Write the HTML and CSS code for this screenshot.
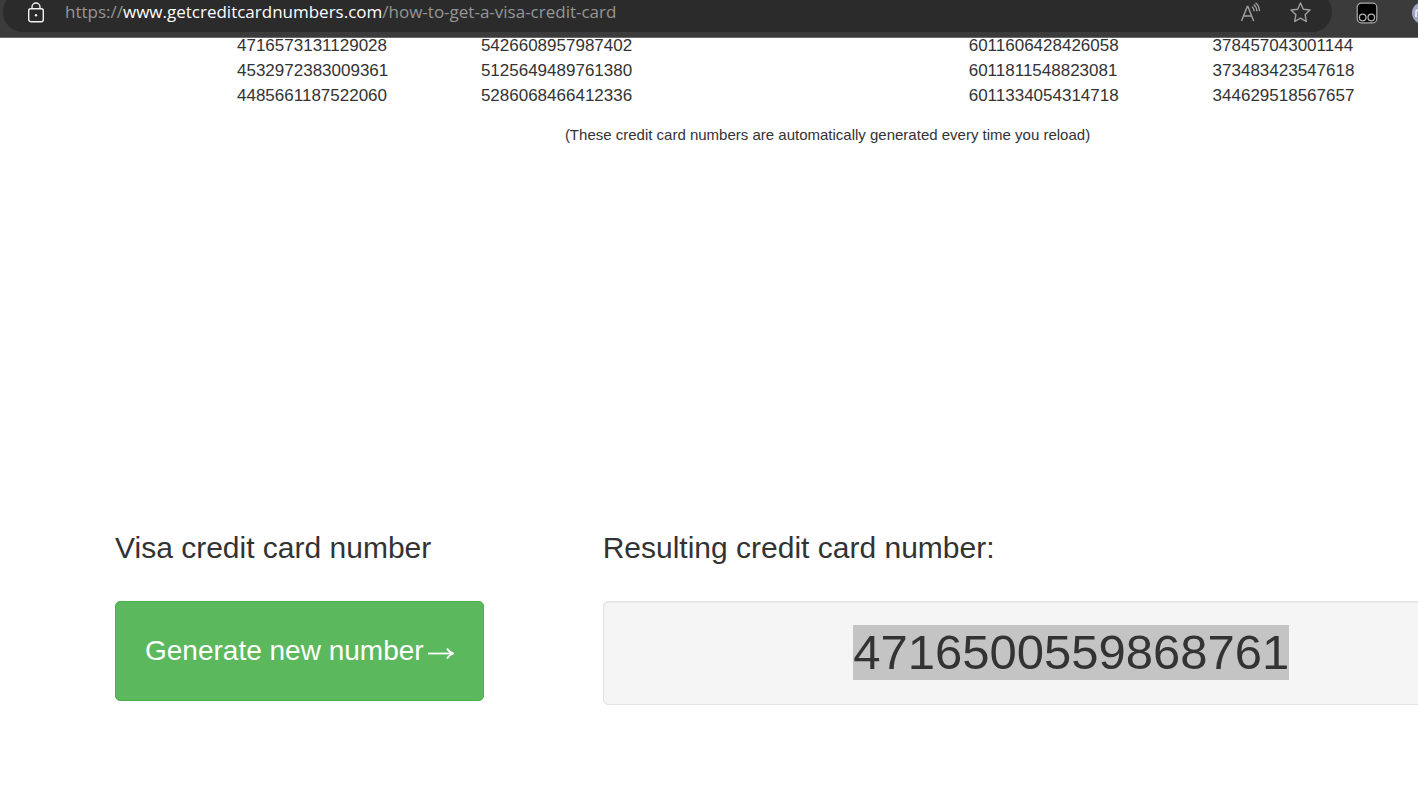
FILE: index.html
```html
<!DOCTYPE html>
<html lang="en">
<head>
<meta charset="utf-8">
<title>How to get a Visa credit card</title>
<link rel="stylesheet" href="styles.css">
</head>
<body>
<header class="toolbar">
  <div class="address">
    <button class="tool lock" type="button" aria-label="Site information">
      <svg width="18" height="22" viewBox="0 0 18 22" fill="none" stroke="#f2f2f2" stroke-width="1.4"><rect x="1.7" y="7.7" width="14.6" height="13" rx="2"/><path d="M5 7.500V6a4 4 0 0 1 8 0v1.500"/><circle cx="9" cy="14.200" r="1.200" fill="#f2f2f2" stroke="none"/></svg>
    </button>
    <div class="url" role="textbox" aria-label="Address" contenteditable="true" spellcheck="false">https://<span class="host">www.getcreditcardnumbers.com</span>/how-to-get-a-visa-credit-card</div>
    <button class="tool" type="button" aria-label="Read aloud">
      <svg width="22" height="22" viewBox="0 0 22 22" fill="none" stroke="#a0a0a0" stroke-width="1.4"><path d="M2.500 20 8.300 5.500h.6l5.800 14.500M4.500 15h8.200M13 5.700q2 1.600 2.300 4.600M14.700 3.500q3 2.400 3.200 6.800M16.500 1.700q3.800 3 4 8.400"/></svg>
    </button>
    <button class="tool" type="button" aria-label="Add to favorites">
      <svg width="22" height="22" viewBox="0 0 22 22" fill="none" stroke="#a0a0a0" stroke-width="1.4" stroke-linejoin="round"><path d="M11.500 2 14.300 8.200 21 9 16.100 13.700 17.300 20.500 11.500 17.200 5.700 20.500 6.900 13.700 2 9 8.700 8.200Z"/></svg>
    </button>
  </div>
  <button class="tool extension" type="button" aria-label="Extension">
    <svg width="22" height="22" viewBox="0 0 22 22"><rect x="1.200" y="1.200" width="19.600" height="19.600" rx="4" fill="#000" stroke="#a8a8a8" stroke-width="1.200"/><g fill="none" stroke="#b4b4b4" stroke-width="1.300"><circle cx="6.700" cy="15.500" r="3.300"/><circle cx="15.300" cy="15.500" r="3.300"/></g></svg>
  </button>
  <button class="tool profile" type="button" aria-label="Profile">
    <svg width="22" height="22" viewBox="0 0 22 22"><circle cx="11" cy="11" r="11" fill="#a0a4c6"/><path d="M4 15v-5q0-2 2.500-2T9 10v5" fill="none" stroke="#f4f4f4" stroke-width="1.500"/></svg>
  </button>
</header>
<main class="page">
  <table class="numbers" aria-label="Credit card numbers">
    <tbody>
      <tr><td>4716573131129028</td><td>5426608957987402</td><td></td><td>6011606428426058</td><td>378457043001144</td></tr>
      <tr><td>4532972383009361</td><td>5125649489761380</td><td></td><td>6011811548823081</td><td>373483423547618</td></tr>
      <tr><td>4485661187522060</td><td>5286068466412336</td><td></td><td>6011334054314718</td><td>344629518567657</td></tr>
    </tbody>
  </table>
  <p class="note">(These credit card numbers are automatically generated every time you reload)</p>
  <div class="generator">
    <section class="source">
      <h3>Visa credit card number</h3>
      <button class="generate" type="button">Generate new number
        <svg width="26" height="20" viewBox="0 0 26 20" fill="none" stroke="#fff" stroke-width="1.800" aria-hidden="true"><path d="M0 12.500H25"/><path d="M19 7.500Q21 11 25.500 12.500 21 14 19 17.500"/></svg>
      </button>
    </section>
    <section class="result">
      <h3 id="result-title">Resulting credit card number:</h3>
      <output class="well" aria-labelledby="result-title"><mark>4716500559868761</mark></output>
    </section>
  </div>
</main>
</body>
</html>
```
FILE: styles.css
```css
* {
  box-sizing: border-box;
}

body {
  margin: 0;
  min-height: 100vh;
  overflow: hidden;
  background: #fff;
  color: #333;
  font-family: "Liberation Sans", Arial, sans-serif;
}

.toolbar {
  display: flex;
  align-items: flex-end;
  height: 38px;
  padding: 0 0 5px 3px;
  overflow: hidden;
  background: #3b3b3b;
  border-bottom: 1px solid #6a6a6a;
}

.address {
  display: flex;
  flex: 1;
  align-items: center;
  gap: 28px;
  height: 40px;
  padding: 0 21px 0 24px;
  border-radius: 20px;
  background: #2b2b2b;
}

.tool {
  display: flex;
  flex: none;
  padding: 0;
  border: 0;
  background: none;
}

.lock {
  margin-right: -8px;
}

.url {
  flex: 1;
  color: #969696;
  font: 17px/24px "Open Sans", sans-serif;
  white-space: nowrap;
  outline: 0;
}

.host {
  color: #fff;
}

.extension {
  margin: 0 34px 8px 24px;
}

.profile {
  margin: 0 -16px 8px 0;
}

/* The container is wider than the window and runs off its right edge. */
.page {
  margin: 0 -122px 0 115px;
}

.numbers {
  width: calc(100% * 10 / 12 + 32px);
  margin: -5px 0 0 122px;
  border-collapse: collapse;
  table-layout: fixed;
  font-size: 17px;
  line-height: 25px;
}

.numbers td {
  padding: 0;
}

.note {
  margin: 17px 0 386px;
  font-size: 15px;
  line-height: 20px;
  text-align: center;
}

.generator {
  display: grid;
  grid-template-columns: repeat(12, 1fr);
  column-gap: 38px;
}

.source {
  grid-column: span 4;
}

.result {
  grid-column: span 8;
}

h3 {
  margin: 0 0 36px;
  font-size: 30px;
  font-weight: 400;
  line-height: 34px;
}

.generate {
  display: flex;
  align-items: center;
  gap: 4px;
  height: 100px;
  padding: 0 29px;
  border: 1px solid #4cae4c;
  border-radius: 5px;
  background: #5cb85c;
  color: #fff;
  font: 28px/40px "Liberation Sans", Arial, sans-serif;
  white-space: nowrap;
}

.well {
  display: flex;
  align-items: center;
  justify-content: center;
  height: 104px;
  padding-bottom: 2px;
  border: 1px solid #e3e3e3;
  border-radius: 5px;
  background: #f5f5f5;
  box-shadow: inset 0 1px 1px rgba(0, 0, 0, 0.05);
  font-size: 49px;
  line-height: 55px;
}

mark {
  background: #c4c4c4;
  color: #333;
}
```
